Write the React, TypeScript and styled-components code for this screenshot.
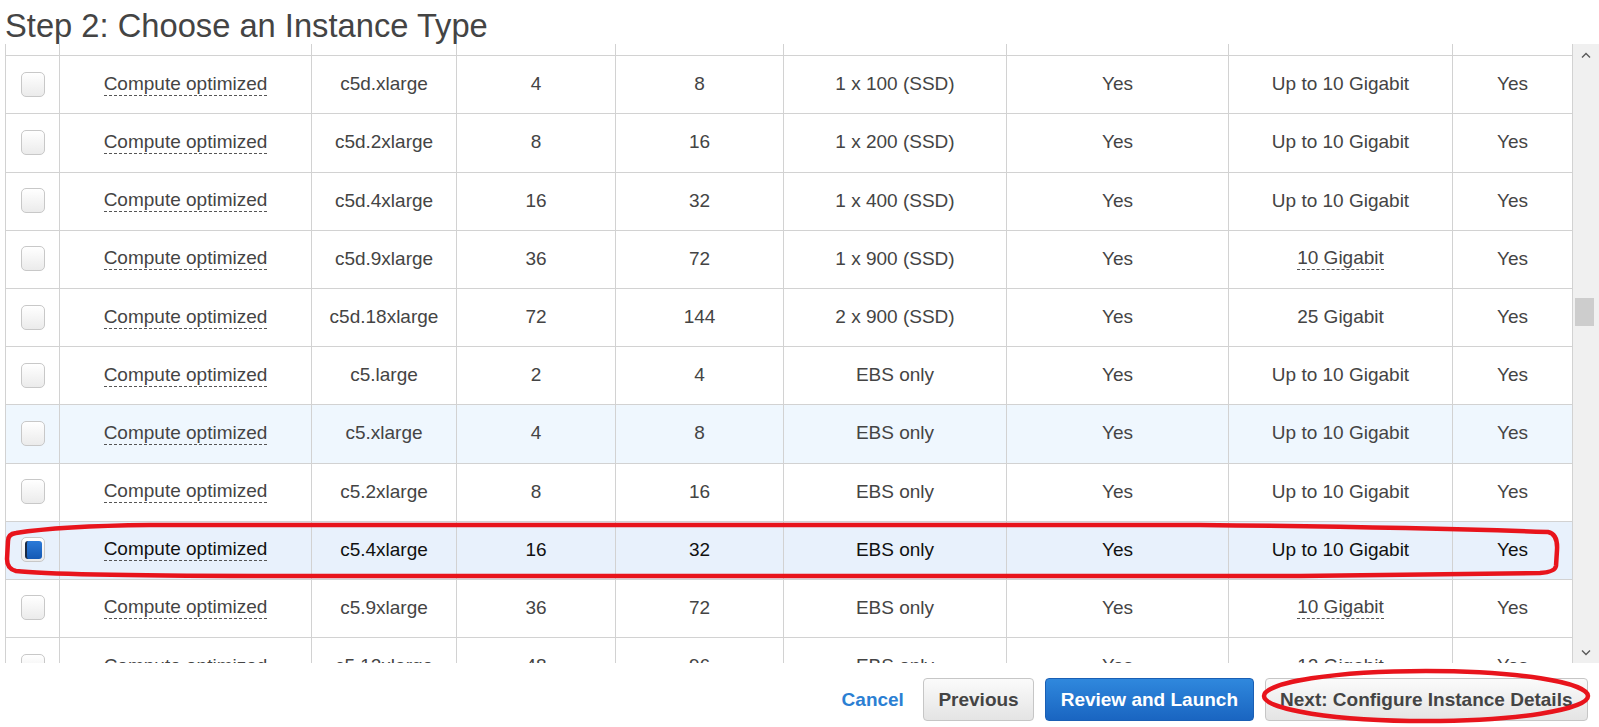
import React, { useLayoutEffect, useRef } from "react";
import styled, { createGlobalStyle, css } from "styled-components";

const GlobalStyle = createGlobalStyle`
  html, body { margin: 0; padding: 0; background: #ffffff; }
  body { font-family: "Liberation Sans", Arial, Helvetica, sans-serif; }
  * { box-sizing: border-box; }
`;

type Tone = "plain" | "hover" | "selected";

interface InstanceRow {
  family: string;
  type: string;
  vcpu: string;
  memory: string;
  storage: string;
  ebs: string;
  network: string;
  networkTip: boolean;
  ipv6: string;
  tone: Tone;
}

const rows: InstanceRow[] = [
  { family: "Compute optimized", type: "c5d.large", vcpu: "2", memory: "4", storage: "1 x 50 (SSD)", ebs: "Yes", network: "Up to 10 Gigabit", networkTip: false, ipv6: "Yes", tone: "plain" },
  { family: "Compute optimized", type: "c5d.xlarge", vcpu: "4", memory: "8", storage: "1 x 100 (SSD)", ebs: "Yes", network: "Up to 10 Gigabit", networkTip: false, ipv6: "Yes", tone: "plain" },
  { family: "Compute optimized", type: "c5d.2xlarge", vcpu: "8", memory: "16", storage: "1 x 200 (SSD)", ebs: "Yes", network: "Up to 10 Gigabit", networkTip: false, ipv6: "Yes", tone: "plain" },
  { family: "Compute optimized", type: "c5d.4xlarge", vcpu: "16", memory: "32", storage: "1 x 400 (SSD)", ebs: "Yes", network: "Up to 10 Gigabit", networkTip: false, ipv6: "Yes", tone: "plain" },
  { family: "Compute optimized", type: "c5d.9xlarge", vcpu: "36", memory: "72", storage: "1 x 900 (SSD)", ebs: "Yes", network: "10 Gigabit", networkTip: true, ipv6: "Yes", tone: "plain" },
  { family: "Compute optimized", type: "c5d.18xlarge", vcpu: "72", memory: "144", storage: "2 x 900 (SSD)", ebs: "Yes", network: "25 Gigabit", networkTip: false, ipv6: "Yes", tone: "plain" },
  { family: "Compute optimized", type: "c5.large", vcpu: "2", memory: "4", storage: "EBS only", ebs: "Yes", network: "Up to 10 Gigabit", networkTip: false, ipv6: "Yes", tone: "plain" },
  { family: "Compute optimized", type: "c5.xlarge", vcpu: "4", memory: "8", storage: "EBS only", ebs: "Yes", network: "Up to 10 Gigabit", networkTip: false, ipv6: "Yes", tone: "hover" },
  { family: "Compute optimized", type: "c5.2xlarge", vcpu: "8", memory: "16", storage: "EBS only", ebs: "Yes", network: "Up to 10 Gigabit", networkTip: false, ipv6: "Yes", tone: "plain" },
  { family: "Compute optimized", type: "c5.4xlarge", vcpu: "16", memory: "32", storage: "EBS only", ebs: "Yes", network: "Up to 10 Gigabit", networkTip: false, ipv6: "Yes", tone: "selected" },
  { family: "Compute optimized", type: "c5.9xlarge", vcpu: "36", memory: "72", storage: "EBS only", ebs: "Yes", network: "10 Gigabit", networkTip: true, ipv6: "Yes", tone: "plain" },
  { family: "Compute optimized", type: "c5.12xlarge", vcpu: "48", memory: "96", storage: "EBS only", ebs: "Yes", network: "12 Gigabit", networkTip: true, ipv6: "Yes", tone: "plain" },
];

const Page = styled.div`
  position: relative;
  width: 1599px;
  height: 727px;
  padding: 7px 0 0 5px;
  overflow: hidden;
`;

const Title = styled.h2`
  margin: 0;
  font-size: 32.7px;
  font-weight: 400;
  line-height: 37px;
  color: #444444;
  white-space: nowrap;
`;

const ScrollFrame = styled.div`
  display: flex;
  height: 619px;
`;

const Viewport = styled.div`
  flex: 1;
  min-width: 0;
  overflow: hidden;
`;

const Row = styled.div<{ $tone: Tone }>`
  display: grid;
  grid-template-columns: 54px 252px 145px 159px 168px 223px 222px 224px 1fr;
  height: 58.2px;
  border-bottom: 1px solid #d2d2d2;
  border-right: 1px solid #d2d2d2;
  color: #444444;
  background: #ffffff;
  ${(p) =>
    p.$tone === "hover" &&
    css`
      background: #eff7fe;
    `}
  ${(p) =>
    p.$tone === "selected" &&
    css`
      background: #e8f1fc;
      color: #111111;
    `}
`;

const Cell = styled.div`
  display: flex;
  align-items: center;
  justify-content: center;
  border-left: 1px solid #d2d2d2;
  font-size: 19px;
  white-space: nowrap;
  padding-bottom: 1px;
`;

const Tip = styled.span`
  border-bottom: 1px dashed #555555;
`;

const Check = styled.span<{ $checked: boolean }>`
  position: relative;
  display: inline-block;
  width: 24px;
  height: 25px;
  border-radius: 5px;
  border: 1px solid #c8c8c8;
  background: linear-gradient(#ffffff, #ebebeb);
  ${(p) =>
    p.$checked &&
    css`
      &::after {
        content: "";
        position: absolute;
        left: 3px;
        top: 3px;
        right: 2px;
        bottom: 2px;
        border-radius: 3px;
        border-left: 2px solid #1a2a44;
        background: linear-gradient(#2b7ad8, #1559b4);
      }
    `}
`;

const ScrollBar = styled.div`
  width: 26px;
  background: #f0f0f0;
  display: flex;
  flex-direction: column;
`;

const ArrowBox = styled.div`
  height: 22px;
  display: flex;
  align-items: center;
  justify-content: center;
`;

const Track = styled.div`
  flex: 1;
`;

const Thumb = styled.div<{ $offset: number }>`
  margin-top: ${(p) => p.$offset}px;
  margin-left: 2px;
  width: 19px;
  height: 28px;
  background: #cdcdcd;
`;

const Footer = styled.div`
  display: flex;
  justify-content: flex-end;
  align-items: center;
  gap: 11px;
  margin-top: 15px;
  padding-right: 11px;
`;

const CancelLink = styled.a`
  font-size: 19px;
  font-weight: 700;
  color: #2b7fd3;
  text-decoration: none;
  margin-right: 8px;
  cursor: pointer;
`;

const Button = styled.button<{ $primary?: boolean }>`
  height: 43px;
  padding: 0 14.5px;
  font-family: "Liberation Sans", Arial, Helvetica, sans-serif;
  font-size: 19px;
  font-weight: 700;
  border-radius: 4px;
  white-space: nowrap;
  cursor: pointer;
  color: #444444;
  border: 1px solid #c6c6c6;
  background: linear-gradient(#fbfbfb, #e4e4e4);
  ${(p) =>
    p.$primary &&
    css`
      color: #ffffff;
      border: 1px solid #1a5fb4;
      background: linear-gradient(#2f88dd, #1a65c1);
    `}
`;

const Annotations = styled.svg`
  position: absolute;
  left: 0;
  top: 0;
  width: 1599px;
  height: 727px;
  pointer-events: none;
`;

const Chevron: React.FC<{ up: boolean }> = ({ up }) => (
  <svg width="10" height="7" viewBox="0 0 10 7">
    <polyline
      points={up ? "1,5.5 5,1.5 9,5.5" : "1,1.5 5,5.5 9,1.5"}
      fill="none"
      stroke="#5a5a5a"
      strokeWidth="1.4"
    />
  </svg>
);

export default function App() {
  const viewRef = useRef<HTMLDivElement>(null);

  useLayoutEffect(() => {
    if (viewRef.current) viewRef.current.scrollTop = 46;
  }, []);

  return (
    <>
      <GlobalStyle />
      <Page>
        <Title>Step 2: Choose an Instance Type</Title>
        <ScrollFrame>
          <Viewport ref={viewRef}>
            {rows.map((r) => (
              <Row key={r.type} $tone={r.tone}>
                <Cell>
                  <Check $checked={r.tone === "selected"} />
                </Cell>
                <Cell>
                  <Tip>{r.family}</Tip>
                </Cell>
                <Cell>{r.type}</Cell>
                <Cell>{r.vcpu}</Cell>
                <Cell>{r.memory}</Cell>
                <Cell>{r.storage}</Cell>
                <Cell>{r.ebs}</Cell>
                <Cell>{r.networkTip ? <Tip>{r.network}</Tip> : r.network}</Cell>
                <Cell>{r.ipv6}</Cell>
              </Row>
            ))}
          </Viewport>
          <ScrollBar>
            <ArrowBox>
              <Chevron up />
            </ArrowBox>
            <Track>
              <Thumb $offset={232} />
            </Track>
            <ArrowBox>
              <Chevron up={false} />
            </ArrowBox>
          </ScrollBar>
        </ScrollFrame>
        <Footer>
          <CancelLink>Cancel</CancelLink>
          <Button>Previous</Button>
          <Button $primary>Review and Launch</Button>
          <Button>Next: Configure Instance Details</Button>
        </Footer>
        <Annotations viewBox="0 0 1599 727">
          <path
            d="M 16 533 Q 60 526 150 525 L 1200 525 Q 1400 527 1548 532 Q 1558 534 1557 550 L 1556 566 Q 1555 572 1540 573 L 1300 576 L 300 576 Q 60 576 16 571 Q 7 569 7 559 L 8 541 Q 8 534 16 533 Z"
            fill="none"
            stroke="#e8141c"
            strokeWidth="4.5"
            strokeLinejoin="round"
          />
          <ellipse cx="1426" cy="696" rx="162" ry="25" fill="none" stroke="#e8141c" strokeWidth="4.5" />
        </Annotations>
      </Page>
    </>
  );
}
